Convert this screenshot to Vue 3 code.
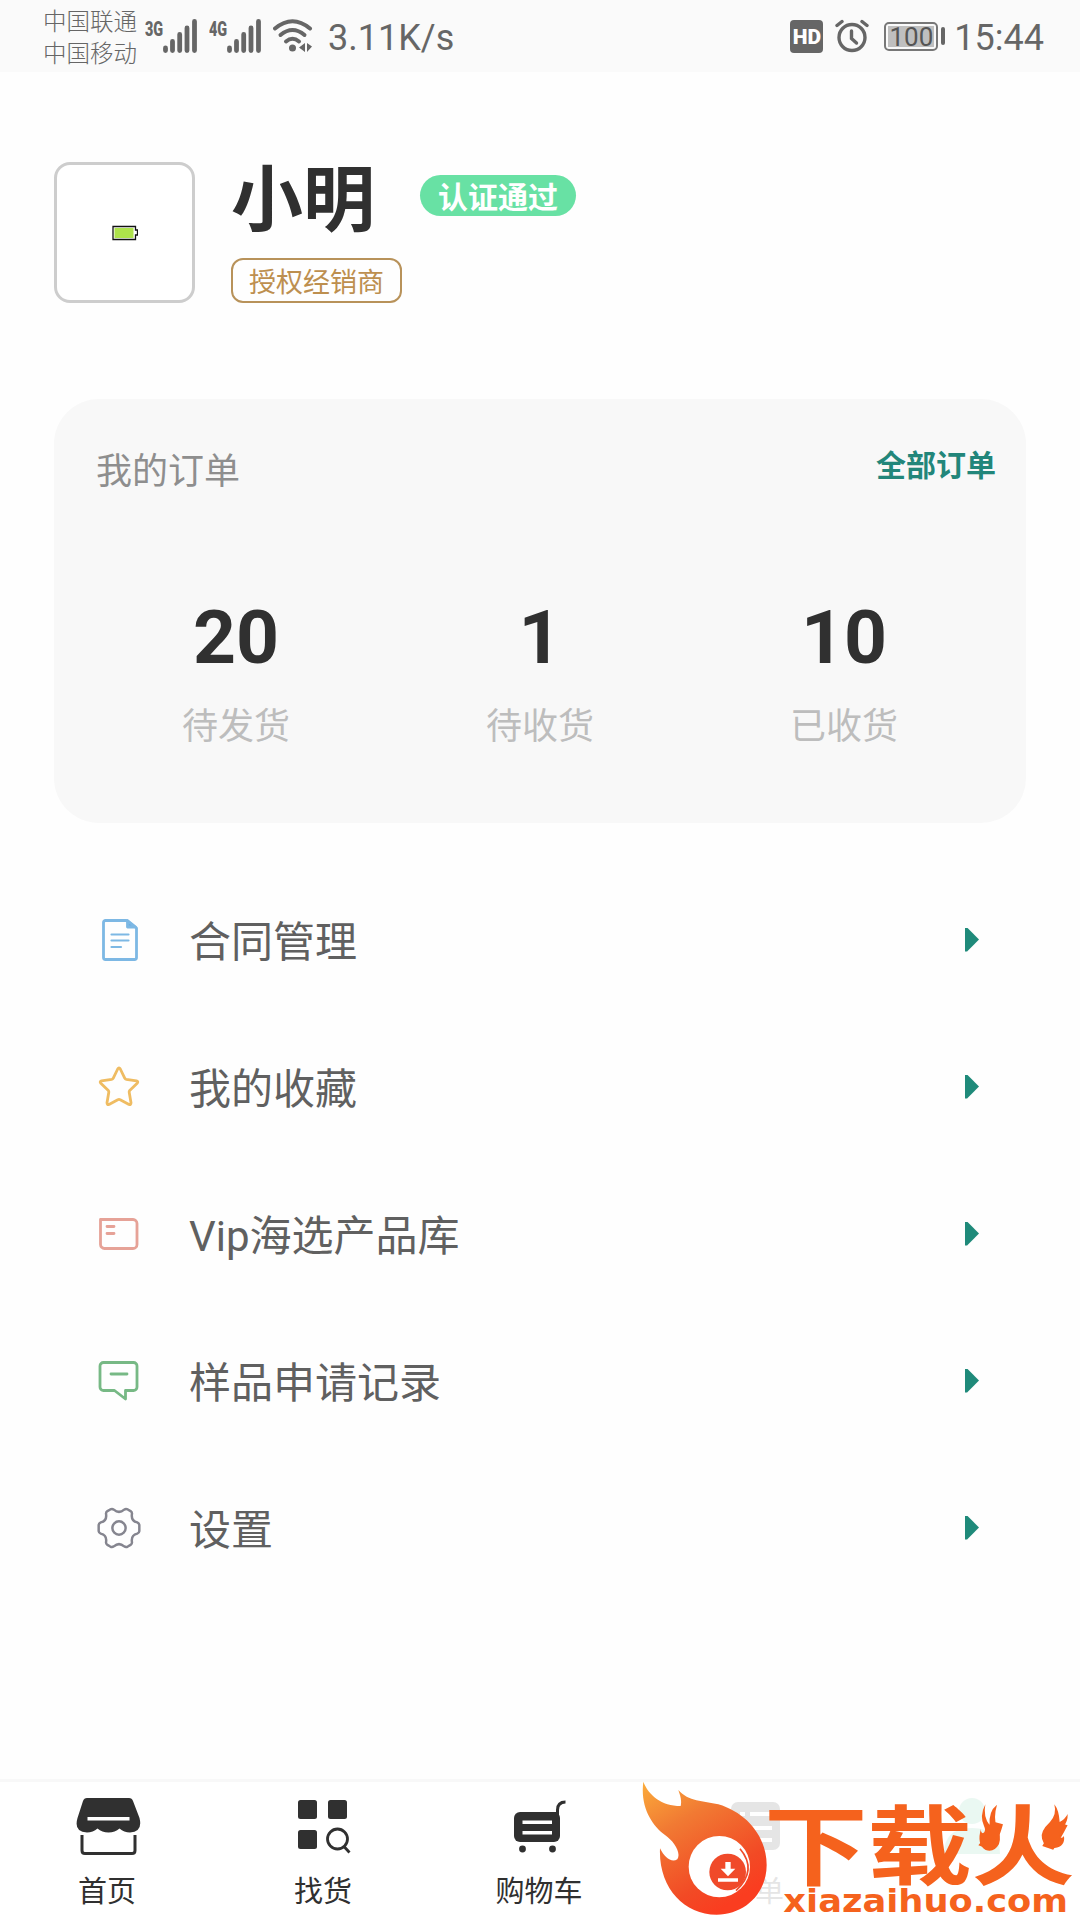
<template>
  <div class="page">
    <!-- 状态栏 -->
    <header class="status-bar">
      <div class="carriers">
        <span>中国联通</span>
        <span>中国移动</span>
      </div>
      <div v-for="net in networks" :key="net" class="signal">
        <span class="net">{{ net }}</span>
        <svg class="bars" viewBox="18 0 36 34">
          <path d="M20.500 29v2.500M27.500 22.500v9M34.700 15.500v16M42 9v22.500M49.500 2.500v29" />
        </svg>
      </div>
      <svg class="wifi" viewBox="0 0 40 34">
        <g fill="none" stroke="#666" stroke-width="4" stroke-linecap="round">
          <path d="M2 9.500Q19.500-5 37 9.500" />
          <path d="M7.500 16Q19.500 6 31.500 16" />
          <path d="M13 22.500Q19.500 17 26 22.500" />
        </g>
        <circle cx="19.500" cy="29" r="3.500" />
        <path d="M32 24v9l-6-4.500zM34 24v9l5-5.500z" />
      </svg>
      <span class="speed">3.11K/s</span>
      <div class="status-right">
        <span class="hd">HD</span>
        <svg class="alarm" viewBox="0 0 34 34">
          <g fill="none" stroke="#666" stroke-width="3.400" stroke-linecap="round">
            <circle cx="17" cy="18.500" r="13" />
            <path d="M16.500 12v7.500l5 4.500" />
            <path d="M2 6.500l5-4M32 6.500l-5-4" />
          </g>
        </svg>
        <div class="battery"><span>100</span></div>
        <i class="battery-cap"></i>
        <span class="time">15:44</span>
      </div>
    </header>

    <!-- 用户信息 -->
    <section class="profile">
      <div class="avatar">
        <svg width="26" height="16" viewBox="0 0 26 16">
          <path d="M1 1.500h22.500v3.500H25.500v5h-2v4.500H1z" fill="#fff" stroke="#111" stroke-width="1.300" />
          <path d="M2.500 3h19v10h-19z" fill="#aee34b" />
        </svg>
      </div>
      <div class="info">
        <div class="name-row">
          <span class="name">小明</span>
          <span class="verified">认证通过</span>
        </div>
        <span class="role">授权经销商</span>
      </div>
    </section>

    <!-- 我的订单 -->
    <section class="orders">
      <div class="orders-head">
        <span class="orders-title">我的订单</span>
        <span class="orders-all">全部订单</span>
      </div>
      <div class="orders-grid">
        <div v-for="item in orders" :key="item.label" class="order-item">
          <span class="order-num">{{ item.count }}</span>
          <span class="order-label">{{ item.label }}</span>
        </div>
      </div>
    </section>

    <!-- 功能列表 -->
    <nav class="menu">
      <div v-for="item in menus" :key="item.icon" class="menu-item">
        <svg class="menu-icon" viewBox="0 0 48 48" fill="none" stroke-width="2.800" stroke-linejoin="round" stroke-linecap="round">
          <g v-if="item.icon === 'doc'" stroke="#7db8e4">
            <path d="M31.500 4.500H10.500a2 2 0 0 0-2 2v35a2 2 0 0 0 2 2h29a2 2 0 0 0 2-2V12z" />
            <path d="M32.500 4.500V11h8z" fill="#6aaee3" />
            <path d="M16.500 18.500h17M16.500 24.500h17M16.500 31h9.500" stroke-width="2.200" />
          </g>
          <path
            v-else-if="item.icon === 'star'"
            stroke="#efbc62"
            d="M22.700 6q1.300-2.400 2.600 0l4.400 9.200q.5 1 1.600 1.200l10.200 1.500q2.200.7.700 2.400l-7.500 7.200q-.7.800-.5 1.800l1.800 10.500q0 2.200-2 1.600l-8.800-4.700q-1.200-.6-2.400 0L14 41.400q-2 .6-2-1.600l1.800-10.500q.2-1-.5-1.800l-7.500-7.200q-1.500-1.700.7-2.400l10.200-1.500q1.100-.2 1.600-1.200z"
          />
          <g v-else-if="item.icon === 'card'" stroke="#e6a297">
            <path d="M5.500 9.500h32.500a4 4 0 0 1 4 4v21a4 4 0 0 1-4 4H9.500a4 4 0 0 1-4-4z" />
            <path d="M12 16.500h7M12 23.500h7" />
          </g>
          <g v-else-if="item.icon === 'chat'" stroke="#77b985">
            <path d="M8.500 5.500h30a3.500 3.500 0 0 1 3.500 3.500v21a3.500 3.500 0 0 1-3.500 3.500h-8v8.500L19.500 33.500h-11A3.500 3.500 0 0 1 5 30V9a3.500 3.500 0 0 1 3.500-3.500z" />
            <path d="M16 17h16" />
          </g>
          <g v-else stroke="#85858f" stroke-width="2.600" transform="translate(1.200 1.200) scale(.95)">
            <path d="M14.800 4.500q2-1 3.800.2 5.400 4.600 10.800 0 1.800-1.200 3.800-.2l3 1.700q1.800 1.200 1.400 3.200-1 7.200 5.600 8.700 2 .8 2.200 2.700v6.400q-.2 1.900-2.200 2.700-6.600 1.500-5.600 8.700.4 2-1.400 3.200l-3 1.700q-2 1-3.800-.2-5.400-4.600-10.800 0-1.800 1.200-3.800.2l-3-1.700q-1.800-1.200-1.400-3.200 1-7.200-5.600-8.700-2-.8-2.200-2.700v-6.400q.2-1.900 2.200-2.700 6.600-1.500 5.600-8.700-.4-2 1.400-3.200z" />
            <circle cx="24" cy="24" r="7" />
          </g>
        </svg>
        <span class="menu-label">{{ item.label }}</span>
        <i class="arrow"></i>
      </div>
    </nav>

    <!-- 底部导航 -->
    <footer class="tab-bar">
      <div v-for="tab in tabs" :key="tab.icon" class="tab" :class="{ faded: tab.faded }">
        <svg class="tab-icon" viewBox="0 0 66 60" fill="#303030">
          <g v-if="tab.icon === 'home'">
            <path d="M12 1h42q3 0 4 3l6.500 17q3.500 14-9.500 14.500-6 0-10.500-4-4.500 4-11 4t-11-4q-4.500 4-10.500 4-13.500-.5-9.500-14.500L8 4q1-3 4-3z" />
            <path d="M12.500 20h42v3.500h-42z" fill="#fff" />
            <path d="M7 38v15.500q0 3 3 3h47q3 0 3-3V38" fill="none" stroke="#303030" stroke-width="3" />
          </g>
          <g v-else-if="tab.icon === 'find'">
            <rect x="7" y="3" width="19" height="19" rx="2.500" />
            <rect x="37" y="3" width="19" height="19" rx="2.500" />
            <rect x="7" y="33" width="19" height="19" rx="2.500" />
            <g fill="none" stroke="#303030" stroke-width="2.800">
              <circle cx="46.500" cy="42" r="10" />
              <path d="M53 49.500l5.500 6" />
            </g>
          </g>
          <g v-else-if="tab.icon === 'cart'">
            <path d="M46 16.500h4.500V13q0-8 8-8" fill="none" stroke="#303030" stroke-width="3" />
            <rect x="7" y="15" width="46" height="30" rx="6" />
            <path d="M15.500 23.500H45V27H15.500zM15.500 34H45v3.500H15.500z" fill="#fff" />
            <circle cx="15.500" cy="52" r="3.400" />
            <circle cx="45.500" cy="52" r="3.400" />
          </g>
          <g v-else-if="tab.icon === 'order'">
            <rect x="8" y="5" width="49" height="48" rx="7" />
            <path d="M17 15h5v4h-5zM27 15h22v4H27zM17 29h5v4h-5zM27 29h22v4H27zM27 41h22v4H27z" fill="#fff" />
          </g>
          <g v-else fill="#5ec79b">
            <circle cx="33" cy="14" r="13" />
            <path d="M5 57q0-26 28-26t28 26z" />
          </g>
        </svg>
        <span v-if="tab.label" class="tab-label">{{ tab.label }}</span>
      </div>

      <!-- 站点标识 -->
      <svg class="site-logo" viewBox="0 0 1350 450">
        <defs>
          <linearGradient id="flame" x1="0" y1="0" x2=".55" y2="1">
            <stop offset="0" stop-color="#fbac3b" />
            <stop offset=".35" stop-color="#f17a33" />
            <stop offset=".8" stop-color="#f24a25" />
            <stop offset="1" stop-color="#fa3d20" />
          </linearGradient>
        </defs>
        <path
          fill="url(#flame)"
          d="M40 35C55 75 95 108 152 108 156 90 150 75 145 60 175 95 220 92 265 103 350 128 410 200 410 285 410 370 345 434 260 434 160 434 85 350 90 235 103 262 125 280 142 268 155 248 130 212 105 195 65 165 30 110 40 35z"
        />
        <circle cx="268" cy="290" r="92" fill="#fff" />
        <circle cx="293" cy="306" r="55" fill="#f04a2a" />
        <path d="M330 236Q384 300 318 362" fill="none" stroke="#f04a2a" stroke-width="5" />
        <path d="M286 276h16v20h14l-22 23-22-23h14zM264 325h60v10h-60z" fill="#fff" />
        <g fill="#f5621d">
          <text class="logo-cn" transform="translate(402 325) scale(1.160 .98)">下</text>
          <text class="logo-cn" transform="translate(712 325) scale(1.170 .96)">载</text>
          <text class="logo-cn" transform="translate(1024 325) scale(1.160 .98)">火</text>
          <path d="M1066 103q-18 35-4 65 8 16-3 22-8-4-6-14-14 46 14 64 26 8 40-18 8-25-6-48-12-30 0-70-26 20-22 62-20-25-13-63z" />
          <path d="M1273 103q8 30-13 53-30 28-24 50 8 30 38 28 32-4 28-36-8 10-14 2 0-16 12-30 14-16 13-38-8 16-24 24-2-35-16-53z" />
          <text class="logo-url" x="460" y="425" textLength="854" lengthAdjust="spacingAndGlyphs">xiazaihuo.com</text>
        </g>
      </svg>
    </footer>
  </div>
</template>

<script setup>
import { ref } from 'vue'

const networks = ['3G', '4G']

// 订单统计
const orders = ref([
  { count: 20, label: '待发货' },
  { count: 1, label: '待收货' },
  { count: 10, label: '已收货' }
])

// 功能入口
const menus = [
  { icon: 'doc', label: '合同管理' },
  { icon: 'star', label: '我的收藏' },
  { icon: 'card', label: 'Vip海选产品库' },
  { icon: 'chat', label: '样品申请记录' },
  { icon: 'setting', label: '设置' }
]

const tabs = [
  { icon: 'home', label: '首页' },
  { icon: 'find', label: '找货' },
  { icon: 'cart', label: '购物车' },
  { icon: 'order', label: '订单', faded: true },
  { icon: 'mine', faded: true }
]
</script>

<style>
body {
  margin: 0;
  background: #fefefe;
}
</style>

<style scoped>
.page {
  display: flex;
  flex-direction: column;
  width: 1080px;
  height: 1920px;
  overflow: hidden;
  background: #fefefe;
  color: #606060;
  font-family: Roboto, 'Noto Sans CJK SC', sans-serif;
  font-weight: 400;
}

/* 状态栏 */
.status-bar {
  display: flex;
  align-items: center;
  box-sizing: border-box;
  height: 72px;
  padding: 0 36px 0 43px;
  background: #fafafa;
  color: #666;
}

.carriers {
  display: flex;
  flex-direction: column;
  width: 102px;
  padding-top: 4px;
  font-size: 23.5px;
  font-weight: 300;
  line-height: 32.5px;
}

.signal {
  display: flex;
  align-items: flex-start;
  width: 54px;
  height: 34px;
  margin-right: 10px;
}

.net {
  width: 18px;
  font-size: 20px;
  font-weight: 900;
  line-height: 20px;
  white-space: nowrap;
  transform: scaleX(0.72);
  transform-origin: left;
}

.bars {
  width: 36px;
  height: 34px;
  fill: none;
  stroke: #666;
  stroke-width: 4.8;
  stroke-linecap: round;
}

.wifi {
  width: 40px;
  height: 34px;
  margin-right: 15px;
  fill: #666;
}

.speed,
.time {
  padding-top: 3px;
  font-size: 36px;
  line-height: 42px;
}

.status-right {
  display: flex;
  align-items: center;
  margin-left: auto;
}

.hd {
  width: 33px;
  height: 33px;
  margin-right: 12px;
  border-radius: 4px;
  background: #666;
  color: #fff;
  font-size: 21px;
  font-weight: 900;
  line-height: 34px;
  text-align: center;
}

.alarm {
  width: 34px;
  height: 34px;
  margin-right: 15px;
}

.battery {
  box-sizing: border-box;
  width: 54px;
  height: 29px;
  padding: 2px;
  border: 2px solid #777;
  border-radius: 5px;
}

.battery span {
  display: block;
  height: 21px;
  background: #bfbfbf;
  color: #555;
  font-size: 26px;
  line-height: 22px;
  text-align: center;
}

.battery-cap {
  width: 4px;
  height: 18px;
  margin: 0 9px 0 3px;
  border-radius: 2px;
  background: #666;
}

/* 用户信息 */
.profile {
  display: flex;
  height: 141px;
  padding: 90px 54px 0;
}

.avatar {
  display: flex;
  align-items: center;
  justify-content: center;
  box-sizing: border-box;
  width: 141px;
  height: 141px;
  border: 3px solid #cdcdcd;
  border-radius: 16px;
  background: #fff;
}

.info {
  display: flex;
  flex-direction: column;
  align-items: flex-start;
  justify-content: space-between;
  margin-left: 36px;
}

.name-row {
  display: flex;
  align-items: flex-start;
}

.name {
  width: 189px;
  padding-top: 2px;
  color: #303030;
  font-size: 72px;
  font-weight: 700;
  line-height: 74px;
}

.verified {
  box-sizing: border-box;
  width: 156px;
  height: 41px;
  margin-top: 13px;
  padding-top: 1px;
  border-radius: 21px;
  background: #68e1a4;
  color: #fff;
  font-size: 30px;
  font-weight: 700;
  line-height: 43px;
  text-align: center;
}

.role {
  box-sizing: border-box;
  width: 171px;
  height: 45px;
  padding-top: 2px;
  border: 2px solid #b8925a;
  border-radius: 12px;
  color: #bd8f4f;
  font-size: 27px;
  line-height: 43px;
  text-align: center;
}

/* 我的订单 */
.orders {
  box-sizing: border-box;
  height: 424px;
  margin: 96px 54px 0;
  padding: 46px 30px 0;
  border-radius: 45px;
  background: #f8f8f8;
}

.orders-head {
  display: flex;
  justify-content: space-between;
  height: 50px;
  padding-left: 12px;
}

.orders-title {
  padding-top: 2px;
  color: #8e8e8e;
  font-size: 36px;
  line-height: 50px;
}

.orders-all {
  padding-top: 1px;
  color: #22867a;
  font-size: 30px;
  font-weight: 700;
  line-height: 40px;
}

.orders-grid {
  display: grid;
  grid-template-columns: repeat(3, 1fr);
  padding-top: 97px;
}

.order-item {
  display: flex;
  flex-direction: column;
  align-items: center;
}

.order-num {
  color: #303030;
  font-size: 75px;
  font-weight: 700;
  line-height: 90px;
}

.order-label {
  margin-top: 20px;
  color: #bdbdbd;
  font-size: 36px;
  line-height: 50px;
}

/* 功能列表 */
.menu {
  display: flex;
  flex-direction: column;
  margin-top: 43px;
  padding: 0 101px 0 95px;
}

.menu-item {
  display: flex;
  align-items: center;
  height: 147px;
}

.menu-icon {
  width: 48px;
  height: 48px;
  margin-right: 46px;
}

.menu-label {
  flex: 1;
  padding-top: 6px;
  font-size: 42px;
  line-height: 60px;
}

.arrow {
  width: 14px;
  height: 24px;
  background: #1f8a7a;
  clip-path: polygon(0 0, 15% 0, 100% 50%, 15% 100%, 0 100%);
}

/* 底部导航 */
.tab-bar {
  position: relative;
  display: flex;
  box-sizing: border-box;
  height: 141px;
  margin-top: auto;
  border-top: 3px solid #f8f8f8;
  background: #fff;
}

.tab {
  display: flex;
  flex: 1;
  flex-direction: column;
  align-items: center;
  padding-top: 15px;
}

.tab.faded {
  opacity: 0.12;
}

.tab-icon {
  width: 66px;
  height: 60px;
}

.tab-label {
  margin-top: 14px;
  padding-right: 2px;
  color: #303030;
  font-size: 29px;
  line-height: 42px;
}

.site-logo {
  position: absolute;
  right: 0;
  bottom: 0;
  width: 450px;
  height: 150px;
}

.logo-cn {
  font-family: 'Noto Sans CJK SC', sans-serif;
  font-size: 268px;
  font-weight: 700;
}

.logo-url {
  font-family: 'DejaVu Sans', sans-serif;
  font-size: 98px;
  font-weight: 700;
}
</style>
